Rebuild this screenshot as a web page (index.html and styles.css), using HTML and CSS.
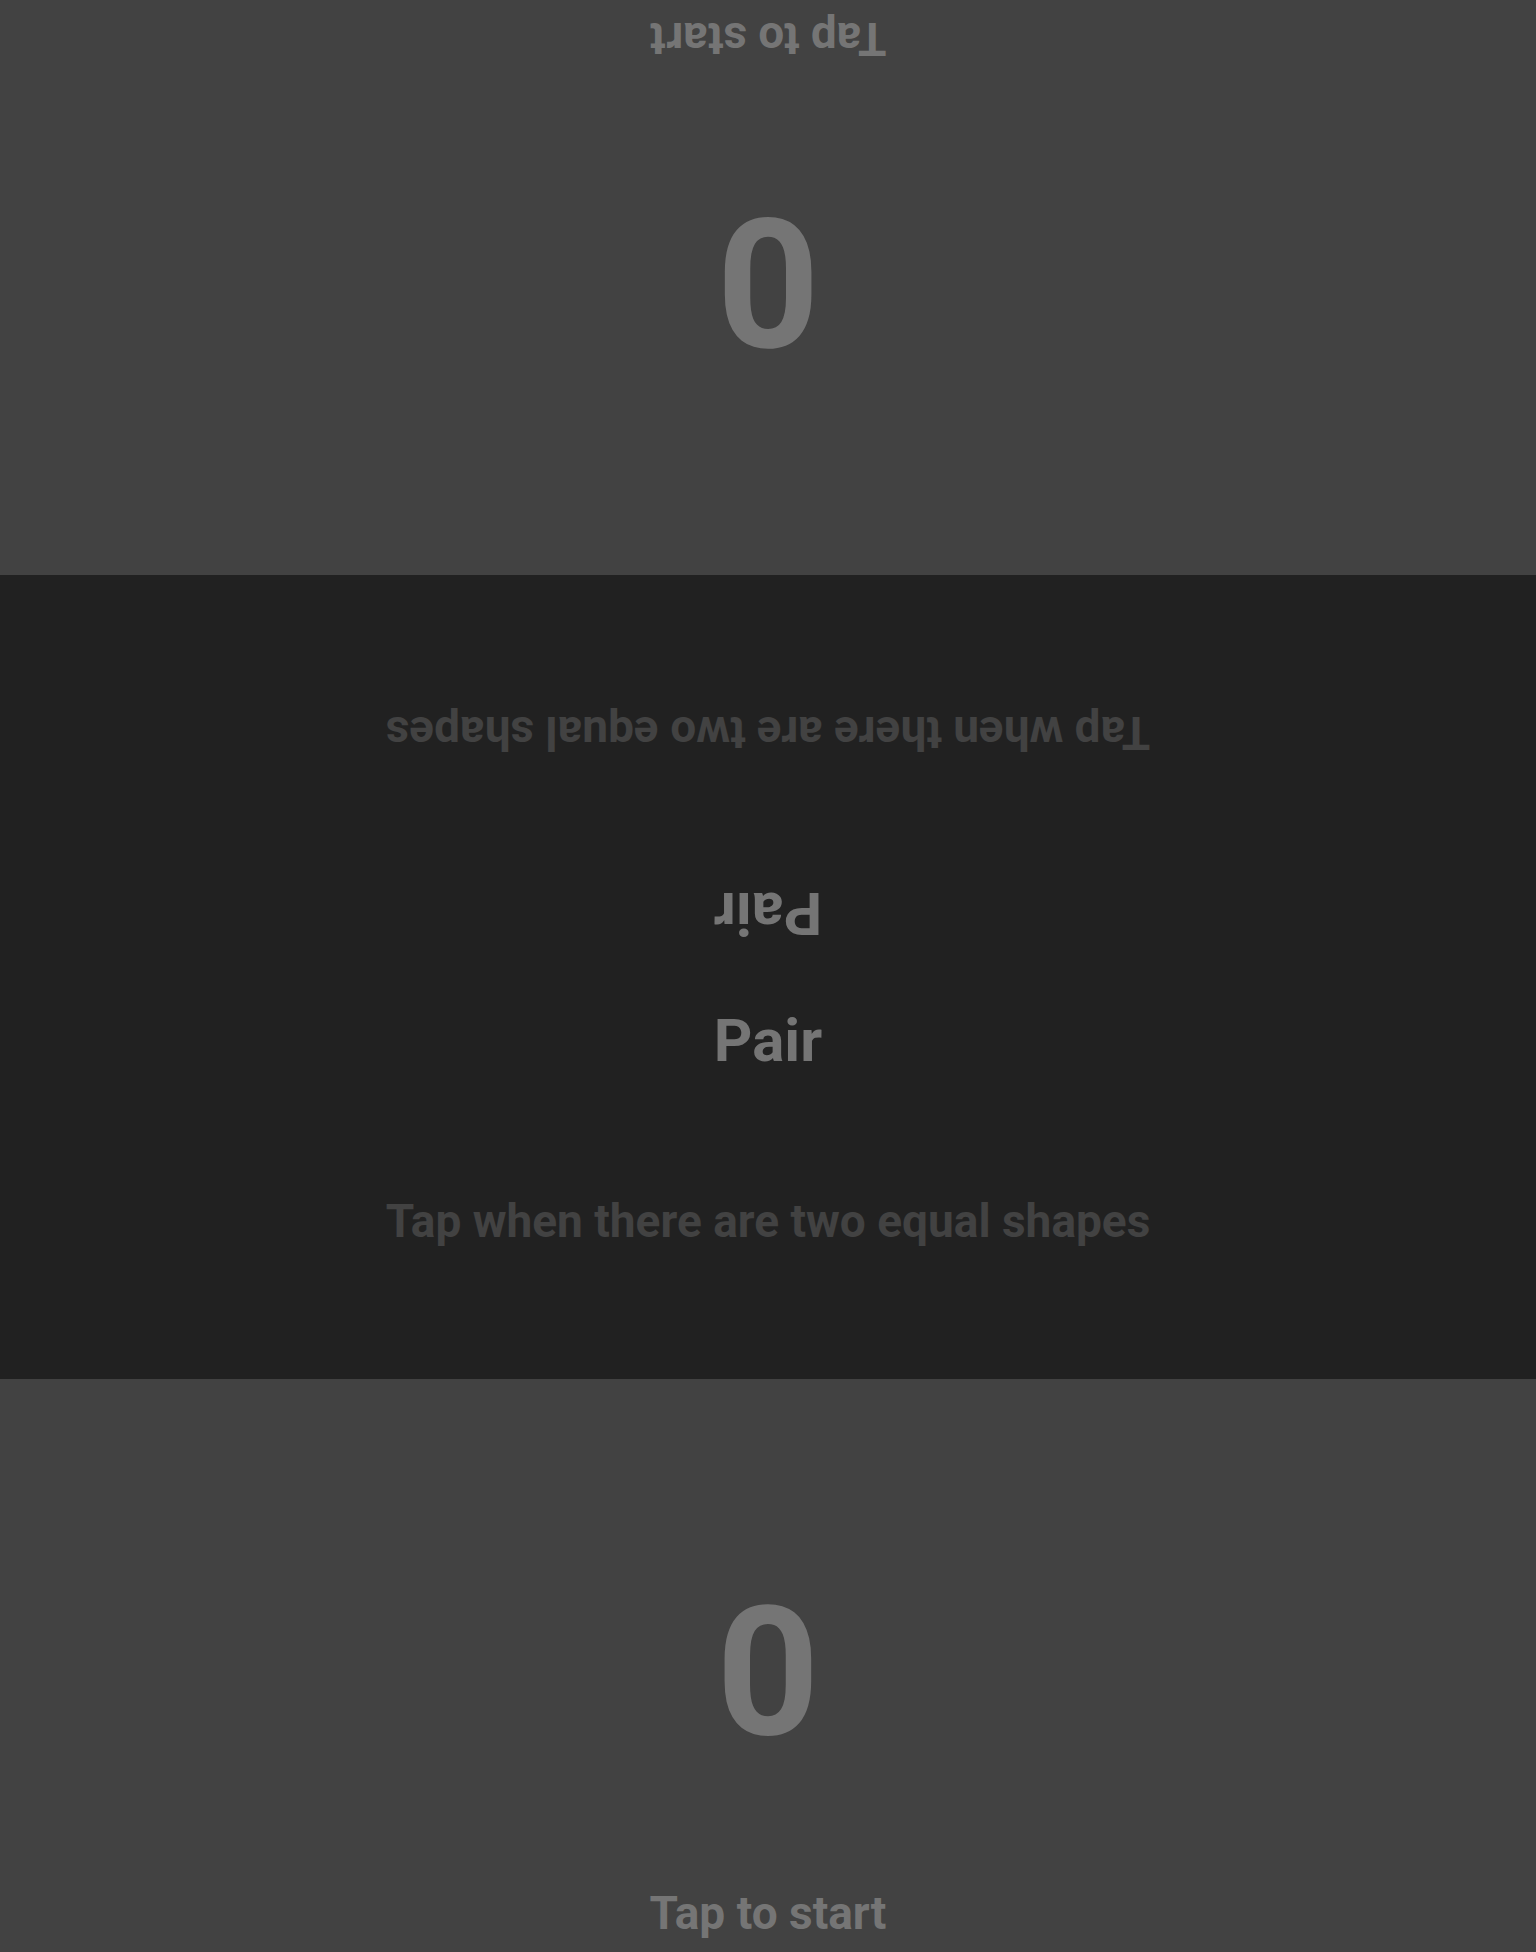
FILE: index.html
```html
<!DOCTYPE html>
<html lang="en">
<head>
<meta charset="utf-8">
<title>Pair</title>
<link rel="stylesheet" href="styles.css">
</head>
<body>
<div class="app">
  <section class="player player-top">
    <div class="score">0</div>
    <div class="label">Tap to start</div>
  </section>
  <section class="board">
    <div class="half half-top">
      <div class="title">Pair</div>
      <div class="hint">Tap when there are two equal shapes</div>
    </div>
    <div class="half">
      <div class="title">Pair</div>
      <div class="hint">Tap when there are two equal shapes</div>
    </div>
  </section>
  <section class="player">
    <div class="score">0</div>
    <div class="label">Tap to start</div>
  </section>
</div>
</body>
</html>
```

FILE: styles.css
```css
html, body {
  margin: 0;
  padding: 0;
  background: #424242;
}

.app {
  width: 1536px;
  height: 1952px;
  display: flex;
  flex-direction: column;
  font-family: Roboto, "Liberation Sans", sans-serif;
  font-weight: 700;
}

.player {
  height: 573px;
  background: #424242;
  color: #757575;
  display: flex;
  flex-direction: column;
  align-items: center;
  padding-top: 204px;
  padding-bottom: 16px;
  box-sizing: border-box;
}

.player-top {
  height: 575px;
  transform: rotate(180deg);
  padding-top: 205px;
}

.score {
  font-size: 180px;
  line-height: 1;
}

.label {
  margin-top: auto;
  font-size: 46px;
  line-height: 1;
}

.board {
  height: 804px;
  background: #212121;
  display: flex;
  flex-direction: column;
}

.half {
  height: 402px;
  display: flex;
  flex-direction: column;
  align-items: center;
  padding-top: 34px;
  gap: 127px;
  box-sizing: border-box;
}

.half-top {
  transform: rotate(180deg);
}

.title {
  font-size: 60px;
  line-height: 1;
  color: #757575;
}

.hint {
  font-size: 46px;
  line-height: 1;
  color: #424242;
}
```
